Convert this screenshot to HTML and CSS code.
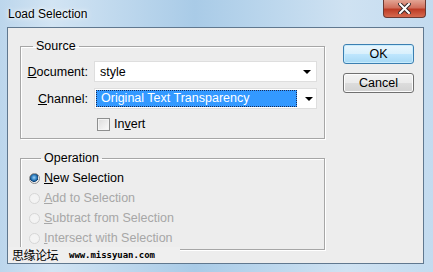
FILE: index.html
```html
<!DOCTYPE html>
<html lang="en">
<head>
  <meta charset="UTF-8">
  <title>Load Selection</title>
  <link rel="stylesheet" href="styles.css">
</head>
<body>
  <div class="window">
    <div class="titlebar">
      <span class="title">Load Selection</span>
      <span class="close">
        <svg width="13" height="11" viewBox="0 0 13 11">
          <path d="M2 1 L11 10 M11 1 L2 10" stroke="#3a2a2a" stroke-width="4" stroke-linecap="square"/>
          <path d="M2 1 L11 10 M11 1 L2 10" stroke="#fff" stroke-width="2" stroke-linecap="square"/>
        </svg>
      </span>
    </div>

    <div class="client">
      <div class="main">
        <fieldset class="group source">
          <legend>Source</legend>
          <div class="fields">
            <label class="field-label"><u>D</u>ocument:</label>
            <div class="combo">
              <span class="combo-value">style</span>
              <span class="arrow"></span>
            </div>

            <label class="field-label"><u>C</u>hannel:</label>
            <div class="combo">
              <span class="combo-value selected">Original Text Transparency</span>
              <span class="arrow"></span>
            </div>

            <div class="check-row">
              <span class="checkbox"></span>
              <span>In<u>v</u>ert</span>
            </div>
          </div>
        </fieldset>

        <fieldset class="group operation">
          <legend>Operation</legend>
          <div class="radio-row">
            <span class="radio checked"></span>
            <span><u>N</u>ew Selection</span>
          </div>
          <div class="radio-row disabled">
            <span class="radio"></span>
            <span><u>A</u>dd to Selection</span>
          </div>
          <div class="radio-row disabled">
            <span class="radio"></span>
            <span><u>S</u>ubtract from Selection</span>
          </div>
          <div class="radio-row disabled">
            <span class="radio"></span>
            <span><u>I</u>ntersect with Selection</span>
          </div>
        </fieldset>
      </div>

      <div class="buttons">
        <button class="btn btn-default">OK</button>
        <button class="btn">Cancel</button>
      </div>

      <div class="watermark">
        <span class="wm-cn">思缘论坛</span>
        <span class="wm-url">www.missyuan.com</span>
      </div>
    </div>
  </div>
</body>
</html>
```

FILE: styles.css
```css
body {
  margin: 0;
  font-family: 'Liberation Sans', Arial, sans-serif;
  font-size: 12.5px;
  color: #000;
}

.window {
  width: 433px;
  height: 272px;
  box-sizing: border-box;
  padding: 0 9px 8px 7px;
  background: linear-gradient(to right, #bcd6ec 0%, #d2e4f3 12%, #a9cbe7 45%, #b9d5ec 60%, #cfe2f2 80%, #c3dbef 100%);
  display: flex;
  flex-direction: column;
}

.titlebar {
  height: 27px;
  display: flex;
  justify-content: space-between;
  align-items: flex-start;
}

.title {
  margin: 7px 0 0 1px;
  font-size: 12px;
  line-height: 15px;
  color: #000;
  text-shadow: 0 0 6px #fff, 0 0 3px #fff;
}

.close {
  width: 43px;
  height: 18px;
  margin-right: -2px;
  box-sizing: border-box;
  border: 1px solid #6b3a33;
  border-top: none;
  border-radius: 0 0 4px 4px;
  background: linear-gradient(to bottom, #e3a594 0%, #d1705d 45%, #bd3c25 55%, #d66a4f 100%);
  display: flex;
  align-items: center;
  justify-content: center;
}

.client {
  position: relative;
  flex: 1;
  display: flex;
  background: #ededed;
  border: 1px solid #60788f;
}

.main {
  padding: 11px 0 0 12px;
}

.group {
  width: 305px;
  box-sizing: border-box;
  margin: 0;
  padding: 0 7px 0 0;
  border: 1px solid #a6a6a6;
  box-shadow: inset 1px 1px #fff, 1px 1px #fff;
}

.group legend {
  margin-left: 12px;
  padding: 0 3px;
  line-height: 15px;
}

.fields {
  display: grid;
  grid-template-columns: 67px 223px;
  column-gap: 6px;
  row-gap: 6px;
  align-items: center;
  padding: 7px 0 7px 0;
}

.field-label {
  text-align: right;
}

.combo {
  height: 21px;
  box-sizing: border-box;
  border: 1px solid #dedede;
  background: #fff;
  display: flex;
  align-items: center;
  padding: 0 5px 0 1px;
}

.combo-value {
  flex: 1;
  padding-left: 4px;
}

.combo-value.selected {
  flex: none;
  width: 201px;
  height: 17px;
  line-height: 15px;
  box-sizing: border-box;
  margin-right: 8px;
  background: #3399ff;
  color: #fff;
  border: 1px dotted #1a2b55;
}

.arrow {
  margin-left: auto;
  width: 0;
  height: 0;
  border-left: 4px solid transparent;
  border-right: 4px solid transparent;
  border-top: 4px solid #000;
}

.check-row {
  grid-column: 2;
  display: flex;
  align-items: center;
  gap: 4px;
  margin: 2px 0 0 3px;
}

.checkbox {
  width: 13px;
  height: 13px;
  box-sizing: border-box;
  border: 1px solid #8e8f8f;
  background: linear-gradient(135deg, #dcdcdc, #fbfbfb);
  box-shadow: inset 0 0 0 1px #f4f4f4;
}

.operation {
  margin-top: 12px;
  padding: 2px 0 1px 8px;
}

.radio-row {
  height: 20px;
  display: flex;
  align-items: center;
  gap: 4px;
}

.radio {
  width: 11px;
  height: 11px;
  box-sizing: border-box;
  border-radius: 50%;
  border: 1px solid #8a8a8a;
  background: radial-gradient(circle at 60% 60%, #fff 30%, #d8d8d8 100%);
}

.radio.checked {
  background: radial-gradient(circle at 45% 40%, #9ad0f5 0%, #2f7fc0 35%, #0c3f74 55%, #e9e9e9 60%, #fff 100%);
}

.radio-row.disabled {
  color: #a7a7a7;
}

.radio-row.disabled .radio {
  border-color: #d6d6d6;
  background: #f3f3f3;
}

.buttons {
  padding: 16px 0 0 18px;
  display: flex;
  flex-direction: column;
  gap: 9px;
}

.btn {
  width: 71px;
  height: 20px;
  padding: 0;
  font-family: inherit;
  font-size: 12.5px;
  color: #000;
  border: 1px solid #707070;
  border-radius: 3px;
  background: linear-gradient(to bottom, #f3f3f3 0%, #ebebeb 48%, #dcdcdc 52%, #d2d2d2 100%);
  box-shadow: inset 0 0 0 1px #fcfcfc;
}

.btn-default {
  border-color: #3c7fb1;
  background: linear-gradient(to bottom, #eaf6fd 0%, #d9f0fc 48%, #bee6fd 52%, #a7d9f5 100%);
  box-shadow: inset 0 0 0 1px #c8ecfd;
}

.watermark {
  position: absolute;
  left: 0;
  bottom: 0;
  width: 168px;
  height: 16px;
  background: #efefef;
  display: flex;
  align-items: center;
  padding-left: 4px;
}

.wm-cn {
  font-family: 'Noto Sans CJK SC', sans-serif;
  font-size: 12px;
  line-height: 14px;
  letter-spacing: -0.5px;
}

.wm-url {
  margin-left: 11px;
  font-family: 'DejaVu Sans Mono', monospace;
  font-size: 9px;
  font-weight: bold;
  letter-spacing: -0.05px;
}
```
